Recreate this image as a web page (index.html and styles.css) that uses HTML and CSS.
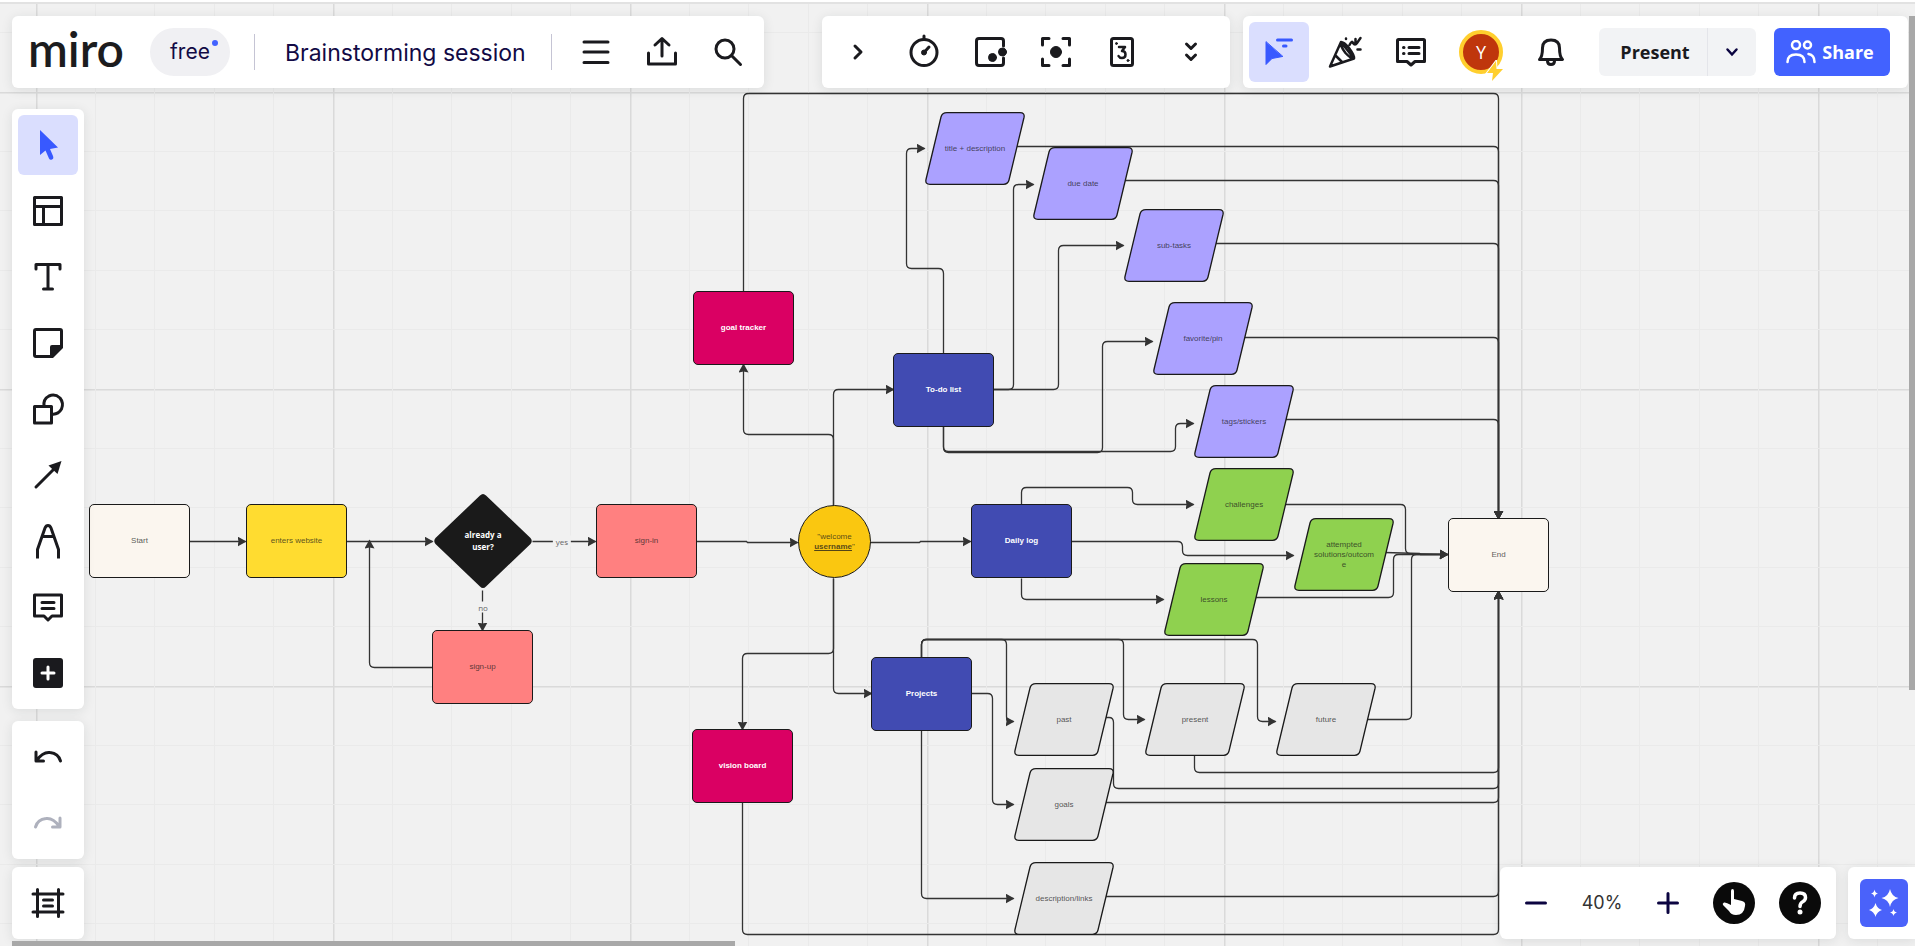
FILE: index.html
```html
<!DOCTYPE html>
<html lang="en">
<head>
<meta charset="utf-8">
<title>Brainstorming session</title>
<link rel="stylesheet" href="styles.css">
</head>
<body>
<main class="board">
  <svg class="board-lines" aria-hidden="true">
    <defs>
      <pattern id="grid" x="36" y="92" width="297" height="297" patternUnits="userSpaceOnUse">
        <path class="grid-major" d="M0 0.75H297M0.75 0V297"/>
        <path class="grid-minor" d="M0 59.5H297M0 118.5H297M0 178.5H297M0 237.5H297M59.5 0V297M118.5 0V297M178.5 0V297M237.5 0V297"/>
      </pattern>
      <marker id="arrow" markerWidth="10" markerHeight="10" refX="8" refY="5" orient="auto" markerUnits="userSpaceOnUse">
        <path d="M0 0L9 5L0 10L1 5Z" fill="#333"/>
      </marker>
      <symbol id="slanted" viewBox="0 0 100 73">
        <path d="M22 .7H95Q100 .7 99 5.5L84 68Q83 72.3 78.500 72.300H5Q0 72.3 1 67.500L16 5Q17 .7 22 .7Z" stroke="#1a1a1a" stroke-width="1.3"/>
      </symbol>
    </defs>
    <rect width="100%" height="100%" fill="url(#grid)"/>
    <g id="connectors"></g>
  </svg>

  <div class="node rect cream" style="left:89px;top:504px">Start</div>
  <div class="node rect yellow" style="left:246px;top:504px">enters website</div>
  <div class="node diamond" style="left:433px;top:493px">
    <svg class="shape" viewBox="0 0 100 96" aria-hidden="true"><path d="M47 2.500Q50 -.5 53 2.500L97.500 45Q100 48 97.500 51L53 93.500Q50 96.500 47 93.500L2.500 51Q0 48 2.500 45Z" fill="#1a1a1a"/></svg>
    <span>already a<br>user?</span>
  </div>
  <div class="node rect coral" style="left:596px;top:504px">sign-in</div>
  <div class="node rect coral" style="left:432px;top:630px">sign-up</div>
  <div class="node circle" style="left:798px;top:505px"><span>"welcome <u>username</u>"</span></div>
  <div class="node rect pink" style="left:693px;top:291px">goal tracker</div>
  <div class="node rect pink" style="left:692px;top:729px">vision board</div>
  <div class="node rect blue" style="left:893px;top:353px">To-do list</div>
  <div class="node rect blue" style="left:971px;top:504px">Daily log</div>
  <div class="node rect blue" style="left:871px;top:657px">Projects</div>
  <div class="node rect cream" style="left:1448px;top:518px">End</div>

  <div class="node slant lilac" style="left:925px;top:112px"><svg class="shape"><use href="#slanted"/></svg><span>title + description</span></div>
  <div class="node slant lilac" style="left:1033px;top:147px"><svg class="shape"><use href="#slanted"/></svg><span>due date</span></div>
  <div class="node slant lilac" style="left:1124px;top:209px"><svg class="shape"><use href="#slanted"/></svg><span>sub-tasks</span></div>
  <div class="node slant lilac" style="left:1153px;top:302px"><svg class="shape"><use href="#slanted"/></svg><span>favorite/pin</span></div>
  <div class="node slant lilac" style="left:1194px;top:385px"><svg class="shape"><use href="#slanted"/></svg><span>tags/stickers</span></div>
  <div class="node slant green" style="left:1194px;top:468px"><svg class="shape"><use href="#slanted"/></svg><span>challenges</span></div>
  <div class="node slant green" style="left:1294px;top:518px"><svg class="shape"><use href="#slanted"/></svg><span>attempted solutions/outcome</span></div>
  <div class="node slant green" style="left:1164px;top:563px"><svg class="shape"><use href="#slanted"/></svg><span>lessons</span></div>
  <div class="node slant gray" style="left:1014px;top:683px"><svg class="shape"><use href="#slanted"/></svg><span>past</span></div>
  <div class="node slant gray" style="left:1145px;top:683px"><svg class="shape"><use href="#slanted"/></svg><span>present</span></div>
  <div class="node slant gray" style="left:1276px;top:683px"><svg class="shape"><use href="#slanted"/></svg><span>future</span></div>
  <div class="node slant gray" style="left:1014px;top:768px"><svg class="shape"><use href="#slanted"/></svg><span>goals</span></div>
  <div class="node slant gray" style="left:1014px;top:862px"><svg class="shape"><use href="#slanted"/></svg><span>description/links</span></div>

  <span class="edge-label" style="left:562px;top:541px">yes</span>
  <span class="edge-label" style="left:483px;top:607px">no</span>
</main>

<div class="ui">
  <header class="topbar">
    <div class="panel file-panel">
      <a class="logo" href="#">miro</a>
      <button class="plan">free</button>
      <span class="divider"></span>
      <button class="board-name">Brainstorming session</button>
      <span class="divider"></span>
      <div class="tools">
        <button class="tool" aria-label="Main menu"><svg viewBox="0 0 36 36"><path d="M6 8H30M6 18H30M6 28.500H30"/></svg></button>
        <button class="tool" aria-label="Export"><svg viewBox="0 0 36 36"><path d="M4.500 19V30H31.500V19M18 22V5M11 11L18 4.500L25 11"/></svg></button>
        <button class="tool" aria-label="Search"><svg viewBox="0 0 36 36"><circle cx="15" cy="15" r="9"/><path d="M22 22L30.500 30.500"/></svg></button>
      </div>
    </div>

    <div class="panel tools collab-panel">
      <button class="tool" aria-label="Collapse"><svg viewBox="0 0 36 36"><path d="M15 12L21 18L15 24"/></svg></button>
      <button class="tool" aria-label="Timer"><svg viewBox="0 0 36 36"><circle cx="18" cy="18.500" r="13"/><path d="M18 5V2M18 18.500L23 13"/><circle class="solid" cx="18" cy="18.500" r="2.500"/></svg></button>
      <button class="tool" aria-label="Voting"><svg viewBox="0 0 36 36"><path d="M31.500 12V7Q31.500 4.500 29 4.500H7Q4.500 4.500 4.500 7V29Q4.500 31.500 7 31.500H29Q31.500 31.500 31.500 29V24"/><circle class="solid" cx="30.500" cy="18" r="4"/><circle class="solid" cx="20.500" cy="23.500" r="4"/></svg></button>
      <button class="tool" aria-label="Attention"><svg viewBox="0 0 36 36"><path d="M4.500 11V4.500H11M25 4.500H31.500V11M31.500 25V31.500H25M11 31.500H4.500V25"/><circle class="solid" cx="18" cy="18" r="5.500"/></svg></button>
      <button class="tool" aria-label="Estimation"><svg viewBox="0 0 36 36"><rect x="7.500" y="4.500" width="21" height="27" rx="2"/><path class="thin" d="M15 13H21L18 17Q21.500 17 21.500 20.500Q21.500 24 18 24Q15.500 24 14.500 22"/><circle class="solid" cx="12.500" cy="9.500" r="1"/><circle class="solid" cx="24" cy="26.500" r="1"/></svg></button>
      <button class="tool wide" aria-label="More apps"><svg viewBox="0 0 36 36"><path d="M13.500 10L18 14.500L22.500 10M13.500 21L18 25.500L22.500 21"/></svg></button>
    </div>

    <div class="panel share-panel">
      <div class="tools">
        <button class="tool active" aria-label="Collaborators' cursors"><svg viewBox="0 0 36 36"><path class="solid" d="M5 8V30.500L11 24.500L21.500 22.500Z"/><path d="M16.500 6H30.500M22.500 12H25"/></svg></button>
        <button class="tool" aria-label="Reactions"><svg viewBox="0 0 36 36"><path class="thin" d="M14 8L3 32.500L27 24.500M14 8L27 24.500M14 8Q17 8 22 14Q28 22 27 24.500Q24 25 18.500 19Q13 12 14 8M8.500 21.500L15 28M22.500 11Q25 6 26 9Q28 12 30 9L33.500 4M30.500 15.500H33.500M19 4.500V5M28.500 9V5"/></svg></button>
        <button class="tool" aria-label="Comments"><svg viewBox="0 0 36 36"><path d="M4.500 6.500Q4.500 5.500 5.500 5.500H30.500Q31.500 5.500 31.500 6.500V27.500H22L18 31L14 27.500H4.500ZM10.500 13.500H11M16 13.500H26M10.500 19.500H11M16 19.500H26"/></svg></button>
      </div>
      <button class="avatar" aria-label="Your profile">Y<svg class="bolt" viewBox="0 0 20 22"><path d="M11 1L2 13H8L7 21L18 9H11.500Z" fill="#ffcf2e" stroke="#fff" stroke-width="2" paint-order="stroke"/></svg></button>
      <button class="tool" aria-label="Notifications"><svg viewBox="0 0 36 36"><path d="M6.500 25.500Q9.500 22.500 9.500 14Q9.500 6 18 6Q26.500 6 26.500 14Q26.500 22.500 29.500 25.500ZM14.500 27Q14.500 30.500 18 30.500Q21.500 30.500 21.500 27"/></svg></button>
      <div class="split">
        <button class="present">Present</button>
        <button class="present-more" aria-label="Presentation options"><svg viewBox="0 0 16 16"><path d="M3.500 5.500L8 10.500L12.500 5.500"/></svg></button>
      </div>
      <button class="share"><svg viewBox="0 0 30 24"><circle cx="10" cy="5" r="4"/><circle cx="21.500" cy="5" r="3.500"/><path d="M1.500 22Q1.500 14.500 10 14.500Q18.500 14.500 18.500 22M22.500 14Q28.500 15 28.500 22"/></svg>Share</button>
    </div>
  </header>

  <div class="workspace">
    <nav class="side">
      <div class="panel tools vertical">
        <button class="tool active" aria-label="Select"><svg viewBox="0 0 36 36"><path class="fill" d="M10 3V28L15.500 23.500L19 31.500Q20 33.500 22 32.500Q24 31.500 23 29L20 22L28 20.500Z"/></svg></button>
        <button class="tool" aria-label="Templates"><svg viewBox="0 0 36 36"><path d="M4.500 4.500H31.500V31.500H4.500ZM4.500 13.500H31.500M13.500 13.500V31.500"/></svg></button>
        <button class="tool" aria-label="Text"><svg viewBox="0 0 36 36"><path d="M6 10V5.500H30V10M18 5.500V30M13.500 30H22.500"/></svg></button>
        <button class="tool" aria-label="Sticky note"><svg viewBox="0 0 36 36"><path d="M31.500 21V6Q31.500 4.500 30 4.500H6Q4.500 4.500 4.500 6V30Q4.500 31.500 6 31.500H21"/><path class="fill" d="M22 20H33V23L23 33H20V22Q20 20 22 20Z"/></svg></button>
        <button class="tool" aria-label="Shapes"><svg viewBox="0 0 36 36"><path d="M4.500 15.500H21.500V32H4.500ZM14 15.500Q13 8 19 5Q25 2.500 30 7Q34 12 31.500 18Q28 24 21.500 23"/></svg></button>
        <button class="tool" aria-label="Connection line"><svg viewBox="0 0 36 36"><path d="M6 30L23 13"/><path class="fill" d="M31.500 4L18.500 8.500L27.500 17Z"/></svg></button>
        <button class="tool" aria-label="Pen"><svg viewBox="0 0 36 36"><path class="butt" d="M7.500 35.500V26.500L15 5Q16 2.500 18 2.500Q20 2.500 21 5L28.500 26.500V35.500M12.500 13.500H23.500"/></svg></button>
        <button class="tool" aria-label="Comment"><svg viewBox="0 0 36 36"><path d="M4.500 6H31.500V27H22L18 31L14 27H4.500ZM12 13.500H24M12 19.500H24"/></svg></button>
        <button class="tool" aria-label="More"><svg viewBox="0 0 36 36"><rect class="fill" x="3" y="3" width="30" height="30" rx="3"/><path class="inverse" d="M18 12V24M12 18H24"/></svg></button>
      </div>
      <div class="panel tools vertical">
        <button class="tool" aria-label="Undo"><svg viewBox="0 0 36 36"><path d="M6 13V22H13.500M6.500 21.500Q13 12.500 20 13.500Q28.500 14.500 30.500 22"/></svg></button>
        <button class="tool" aria-label="Redo" disabled><svg viewBox="0 0 36 36"><path d="M30 13V22H22.500M29.500 21.500Q23 12.500 16 13.500Q7.500 14.500 5.500 22"/></svg></button>
      </div>
      <div class="panel tools frames">
        <button class="tool" aria-label="Frames"><svg viewBox="0 0 36 36"><path d="M7.500 4.500V31.500M28.500 4.500V31.500M3 9H33M3 27H33M13.500 15H22.500M13.500 21H22.500"/></svg></button>
      </div>
    </nav>

    <footer class="bottom">
      <div class="panel tools">
        <button class="tool navy" aria-label="Zoom out"><svg viewBox="0 0 36 36"><path d="M8.500 18H27.500"/></svg></button>
        <button class="tool zoom">40%</button>
        <button class="tool navy" aria-label="Zoom in"><svg viewBox="0 0 36 36"><path d="M8.500 18H27.500M18 8.500V27.500"/></svg></button>
        <button class="tool round" aria-label="Learn"><svg viewBox="0 0 42 42"><circle cx="21" cy="21" r="21" fill="#0a0a0a"/><path d="M18 9Q18 7 19.500 7Q21 7 21 9V17L29 19Q33 20 32 24Q31 33 23 33Q18 33 16 29L10 23Q9 21.500 11 20.500Q13 20 18 23Z" fill="#fff"/></svg></button>
        <button class="tool round" aria-label="Help"><svg viewBox="0 0 42 42"><circle cx="21" cy="21" r="21" fill="#0a0a0a"/><path d="M15.500 16Q15.500 11 21 11Q26.500 11 26.500 15.500Q26.500 18 24 19.500Q21 21 21 24.500" fill="none" stroke="#fff" stroke-width="3.500" stroke-linecap="round"/><circle cx="21" cy="30" r="2.500" fill="#fff"/></svg></button>
      </div>
      <div class="panel ai-panel">
        <button class="ai" aria-label="Miro AI"><svg viewBox="0 0 48 48"><path fill="#fff" d="M30 10Q31.500 17.500 38.500 19Q31.500 20.500 30 28Q28.500 20.500 21.500 19Q28.500 17.500 30 10ZM15.500 24Q17 29.500 22 31Q17 32.500 15.500 38Q14 32.500 9 31Q14 29.500 15.500 24ZM14.500 10.500Q15 14 18 14.500Q15 15 14.500 18.500Q14 15 11 14.500Q14 14 14.500 10.500ZM33.500 30Q34 33 37 33.500Q34 34 33.500 37Q33 34 30 33.500Q33 33 33.500 30Z"/></svg></button>
      </div>
    </footer>
  </div>
  <div class="scrollbar vertical-bar"></div>
  <div class="scrollbar horizontal-bar"></div>
</div>
<script src="script.js"></script>
</body>
</html>
```

FILE: styles.css
```css
* {
  box-sizing: border-box;
}

body {
  margin: 0;
  height: 100vh;
  overflow: hidden;
  position: relative;
  font-family: "Open Sans", "Noto Sans", sans-serif;
  color: #1a1a1e;
  background: #f1f1f1;
}

button {
  font: inherit;
  color: inherit;
  border: 0;
  padding: 0;
  background: none;
  cursor: pointer;
}

/* Board */
.board {
  position: absolute;
  inset: 0;
  overflow: hidden;
}

.board-lines {
  position: absolute;
  inset: 0;
  width: 100%;
  height: 100%;
}

.grid-major {
  stroke: #dadada;
  stroke-width: 1.5;
}

.grid-minor {
  stroke: #eaeaea;
  stroke-width: 1;
}

.connector {
  fill: none;
  stroke: #333;
  stroke-width: 1.3px;
}

.node {
  position: absolute;
  display: flex;
  align-items: center;
  justify-content: center;
  text-align: center;
  font: 8px/10px "Liberation Sans", Arial, sans-serif;
  color: rgba(26, 26, 26, 0.75);
}

.node > span {
  position: relative;
}

.rect {
  width: 101px;
  height: 74px;
  border: 1px solid #1a1a1a;
  border-radius: 5px;
}

.cream { background: #fbf6ef; }
.yellow { background: #ffdc30; }
.coral { background: #ff8080; }
.pink { background: #da0063; }
.blue { background: #414bb2; }

.pink,
.blue {
  color: #fff;
  font-weight: 700;
}

.circle {
  width: 73px;
  height: 73px;
  border: 1px solid #1a1a1a;
  border-radius: 50%;
  background: #fac710;
}

.circle span {
  width: 44px;
}

.circle u {
  font-weight: 700;
}

.shape {
  position: absolute;
  inset: 0;
  width: 100%;
  height: 100%;
}

.slant {
  width: 100px;
  height: 73px;
}

.slant span {
  max-width: 64px;
  overflow-wrap: anywhere;
}

.lilac { fill: #aba1ff; }
.green { fill: #8fd14f; }
.gray { fill: #e6e6e6; }

.diamond {
  width: 100px;
  height: 96px;
  color: #fff;
  font: 700 8px/12px "Open Sans", sans-serif;
}

.edge-label {
  position: absolute;
  transform: translate(-50%, -50%);
  padding: 0 3px;
  background: #f1f1f1;
  font-size: 8px;
  line-height: 11px;
  color: #666;
}

/* Interface panels */
.ui {
  position: absolute;
  inset: 0;
  display: flex;
  flex-direction: column;
  border-top: 2px solid #fff;
}

.ui::before {
  content: "";
  height: 2px;
  background: #e2e2e2;
}

.panel {
  background: #fff;
  border-radius: 6px;
  box-shadow: 0 2px 12px rgba(34, 36, 40, 0.1);
}

.topbar {
  display: flex;
  padding: 12px 7px 0 12px;
}

.tools {
  display: flex;
  gap: 6px;
}

.panel.tools {
  padding: 6px;
}

.vertical {
  flex-direction: column;
}

.tool {
  width: 60px;
  height: 60px;
  border-radius: 6px;
  display: flex;
  align-items: center;
  justify-content: center;
}

.tool svg {
  width: 36px;
  height: 36px;
  fill: none;
  stroke: currentColor;
  stroke-width: 3;
  stroke-linecap: round;
  stroke-linejoin: round;
}

.tool .solid {
  fill: currentColor;
  stroke-width: 1;
}

.tool .thin {
  stroke-width: 2.5;
}

.tool .fill {
  fill: currentColor;
  stroke: none;
}

.tool .inverse {
  stroke: #fff;
}

.tool .butt {
  stroke-linecap: butt;
}

.tool:disabled {
  color: #aeb1bd;
}

.wide {
  width: 66px;
}

.active {
  background: #dadefe;
  color: #3859ff;
}

.file-panel {
  display: flex;
  align-items: center;
  padding: 6px 6px 6px 16px;
}

.logo {
  width: 98px;
  font: 600 48px/48px Lato, sans-serif;
  color: #1c1c1e;
  text-decoration: none;
  padding-bottom: 6px;
}

.plan {
  position: relative;
  width: 80px;
  height: 48px;
  margin: 0 24px 0 24px;
  border-radius: 24px;
  background: #f0f0f3;
  color: #120a45;
  font: 21px/28px Inter, sans-serif;
}

.plan::after {
  content: "";
  position: absolute;
  top: 12px;
  right: 12px;
  width: 6px;
  height: 6px;
  border-radius: 50%;
  background: #4262ff;
}

.divider {
  width: 1px;
  height: 36px;
  background: #c5c4d4;
}

.board-name {
  padding: 2px 25px 0 30px;
  color: #120a45;
  font: 23px/32px Inter, sans-serif;
}

.file-panel .tools {
  margin-left: 14px;
}

.collab-panel {
  margin-left: auto;
  margin-right: 13px;
}

.share-panel {
  display: flex;
  align-items: center;
  padding: 6px 18px 6px 6px;
}

.avatar {
  position: relative;
  width: 44px;
  height: 44px;
  margin: 0 18px;
  border: 4px solid #ffcf2e;
  border-radius: 50%;
  background: #bf360c;
  color: #fff;
  font: 18px/36px "Open Sans", sans-serif;
}

.bolt {
  position: absolute;
  right: -6px;
  bottom: -12px;
  width: 20px;
  height: 22px;
}

.split {
  display: flex;
  margin: 0 18px;
  height: 48px;
  border-radius: 6px;
  overflow: hidden;
  background: #f2f3f5;
}

.present {
  width: 108px;
  padding-left: 4px;
  font-size: 18px;
  font-weight: 700;
}

.present-more {
  width: 49px;
  border-left: 1px solid #e4e5ea;
  color: #0b0440;
}

.present-more svg {
  display: block;
  margin: 0 auto;
  width: 16px;
  height: 16px;
  fill: none;
  stroke: currentColor;
  stroke-width: 2.5;
  stroke-linecap: round;
}

.share {
  display: flex;
  align-items: center;
  justify-content: center;
  gap: 6px;
  width: 116px;
  height: 48px;
  padding-right: 4px;
  border-radius: 6px;
  background: #4262ff;
  color: #fff;
  font-size: 18px;
  font-weight: 700;
}

.share svg {
  width: 30px;
  height: 24px;
  fill: none;
  stroke: currentColor;
  stroke-width: 2.5;
  stroke-linecap: round;
}

.workspace {
  flex: 1;
  display: flex;
  justify-content: space-between;
  align-items: stretch;
  padding: 21px 0 7px 12px;
}

.side {
  display: flex;
  flex-direction: column;
  gap: 12px;
}

.frames {
  margin-top: -4px;
}

.bottom {
  align-self: flex-end;
  display: flex;
  gap: 12px;
}

.navy {
  color: #0b0440;
}

.zoom {
  font: 18px/24px Inter, sans-serif;
  color: #333;
}

.tool.round svg {
  width: 42px;
  height: 42px;
  stroke: none;
}

.ai-panel {
  padding: 12px 7px 12px 12px;
  border-radius: 6px 0 0 6px;
}

.ai {
  display: block;
  width: 48px;
  height: 48px;
  border-radius: 6px;
  background: #4a62fa;
}

.ai svg {
  display: block;
}

.scrollbar {
  position: absolute;
  background: #a8a8a8;
}

.vertical-bar {
  top: 14px;
  right: 0;
  width: 6px;
  height: 674px;
}

.horizontal-bar {
  left: 12px;
  bottom: 0;
  width: 723px;
  height: 5px;
}
```

FILE: script.js
```js
// Each connector is a list of x,y points, whether it ends in an arrowhead,
// and optionally the corner radius.
const connectors = [
  ["190,541 246,541", true],
  ["347,541 433,541", true],
  ["433,667 370,667 370,540", true],
  ["533,541 596,541", true],
  ["483,590 483,630", true],
  ["697,541 747,541 748,542 798,542", true, 0],
  ["870,542 920,542 921,541 971,541", true, 0],
  ["834,505 834,434 744,434 744,364", true],
  ["834,505 834,389 894,389", true],
  ["834,578 834,653 743,653 743,729", true],
  ["834,578 834,693 872,693", true],
  ["744,291 744,93 1499,93 1499,518", true],
  ["743,801 743,934 1499,934 1499,591", true],
  ["944,353 944,268 907,268 907,148 925,148", true],
  ["994,389 1014,389 1014,184 1034,184", true],
  ["994,389 1059,389 1059,245 1124,245", true],
  ["944,426 944,452 1103,452 1103,341 1153,341", true],
  ["944,426 944,451 1176,451 1176,423 1194,423", true],
  ["1017,146 1499,146 1499,518", true],
  ["1125,180 1499,180 1499,518", true],
  ["1216,243 1499,243 1499,518", true],
  ["1244,337 1499,337 1499,518", true],
  ["1286,419 1499,419 1499,518", true],
  ["1022,504 1022,487 1133,487 1133,504 1194,504", true],
  ["1072,541 1183,541 1183,555 1294,555", true],
  ["1022,578 1022,599 1164,599", true],
  ["1285,504 1406,504 1406,553 1448,554", true],
  ["1385,552 1420,553 1421,554 1448,554", true, 0],
  ["1256,597 1394,597 1394,554 1448,554", true],
  ["1366,719 1412,719 1412,554 1448,554", true],
  ["922,657 922,639 1007,639 1007,721 1014,721", true],
  ["922,657 922,639 1124,639 1124,719 1145,719", true],
  ["922,657 922,639 1258,639 1258,721 1276,721", true],
  ["972,693 993,693 993,804 1014,804", true],
  ["922,730 922,898 1014,898", true],
  ["1195,755 1195,772 1499,772 1499,591", true],
  ["1105,717 1114,717 1114,788 1499,788 1499,591", true],
  ["1105,802 1499,802 1499,591", true],
  ["1105,896 1499,896 1499,591", true]
];

// Move from corner b towards a by at most r pixels.
function towards(b, a, r) {
  const len = Math.hypot(a[0] - b[0], a[1] - b[1]);
  const k = Math.min(r, len / 2) / len;
  return [b[0] + (a[0] - b[0]) * k, b[1] + (a[1] - b[1]) * k];
}

// Lines are centred on half pixels so that they stay crisp.
function toPoint(pair) {
  const [x, y] = pair.split(",").map(Number);
  return [x - 0.5, y + 0.5];
}

const layer = document.getElementById("connectors");
for (const [route, arrow, radius = 5] of connectors) {
  const pts = route.split(" ").map(toPoint);
  let d = "M" + pts[0];
  for (let i = 1; i < pts.length - 1; i++) {
    d += "L" + towards(pts[i], pts[i - 1], radius);
    d += "Q" + pts[i] + " " + towards(pts[i], pts[i + 1], radius);
  }
  d += "L" + pts[pts.length - 1];
  const path = document.createElementNS("http://www.w3.org/2000/svg", "path");
  path.setAttribute("d", d);
  path.setAttribute("class", "connector");
  if (arrow) path.setAttribute("marker-end", "url(#arrow)");
  layer.appendChild(path);
}
```
